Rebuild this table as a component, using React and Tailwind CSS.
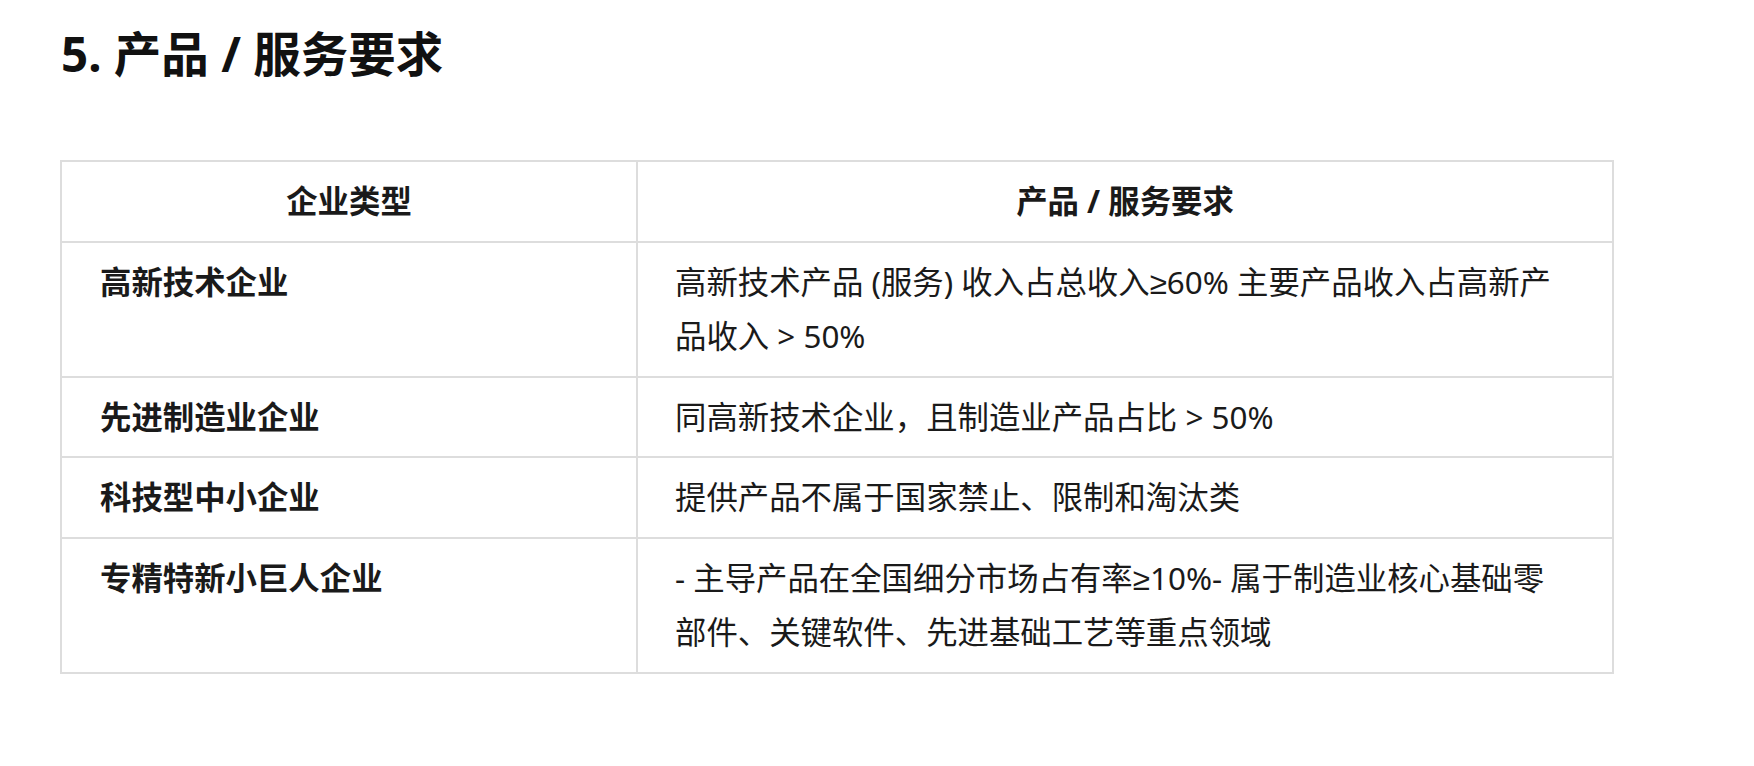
export default function App() {
  const rows = [
    {
      type: '高新技术企业',
      req: '高新技术产品 (服务) 收入占总收入≥60% 主要产品收入占高新产品收入 > 50%',
    },
    { type: '先进制造业企业', req: '同高新技术企业，且制造业产品占比 > 50%' },
    { type: '科技型中小企业', req: '提供产品不属于国家禁止、限制和淘汰类' },
    {
      type: '专精特新小巨人企业',
      req: '- 主导产品在全国细分市场占有率≥10%- 属于制造业核心基础零部件、关键软件、先进基础工艺等重点领域',
    },
  ];

  return (
    <div
      className="min-h-screen bg-white text-[#1a1a1a] pl-[60px] pt-[24px]"
      style={{ fontFamily: '"Noto Sans", "Liberation Sans", "Noto Sans CJK SC", sans-serif' }}
    >
      {/* 标题 */}
      <h2 className="text-[47.5px] leading-[60px] font-bold text-[#111] pl-[1px]">
        5. 产品 / 服务要求
      </h2>

      <table className="mt-[76px] w-[1554px] table-fixed border-collapse border-2 border-[#dddddd] text-[31.4px] leading-[54.5px]">
        <colgroup>
          <col className="w-[576px]" />
          <col />
        </colgroup>
        <thead>
          <tr>
            <th className="border-2 border-[#dddddd] px-[40px] py-[12px] text-center font-bold">企业类型</th>
            <th className="border-2 border-[#dddddd] px-[40px] py-[12px] text-center font-bold">产品 / 服务要求</th>
          </tr>
        </thead>
        <tbody>
          {rows.map((r) => (
            <tr key={r.type}>
              <td className="border-2 border-[#dddddd] pl-[38px] pr-[20px] py-[12px] align-top font-bold">{r.type}</td>
              <td className="border-2 border-[#dddddd] pl-[37px] pr-[52px] py-[12px] align-top">{r.req}</td>
            </tr>
          ))}
        </tbody>
      </table>
    </div>
  );
}
